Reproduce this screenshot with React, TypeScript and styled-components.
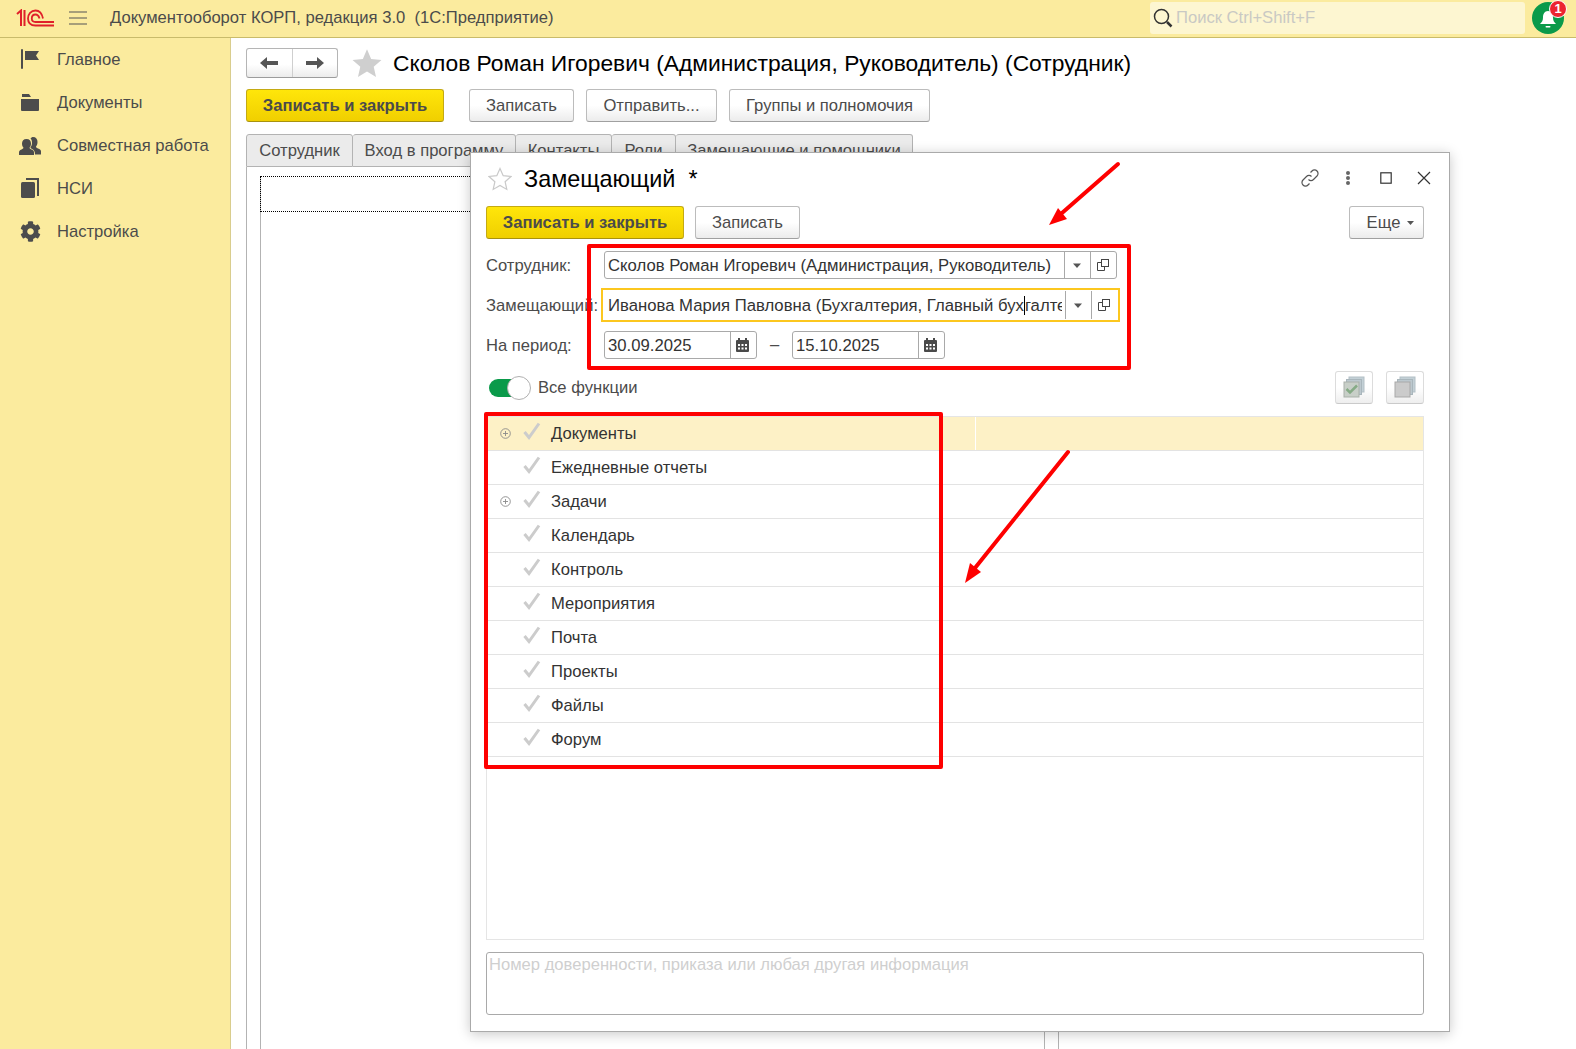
import * as React from 'react';
import styled, { createGlobalStyle } from 'styled-components';
import { FaCog } from 'react-icons/fa';

const GlobalStyle = createGlobalStyle`
  html, body {
    margin: 0;
    padding: 0;
    height: 100%;
    overflow: hidden;
    background: #ffffff;
  }
  body {
    font-family: 'Liberation Sans', Arial, sans-serif;
    font-size: 16.6px;
    color: #4b4b4b;
  }
  * {
    box-sizing: border-box;
  }
`;

const Page = styled.div`
  position: relative;
  display: flex;
  flex-direction: column;
  width: 1576px;
  height: 1049px;
  overflow: hidden;
`;

const TopBar = styled.header`
  display: flex;
  align-items: center;
  flex: 0 0 38px;
  padding: 0 0 1px 16px;
  background: #fbeb9e;
  border-bottom: 1px solid #c9bb6b;
`;

const Logo = styled.svg`
  flex: none;
  width: 38px;
  height: 18px;
`;

const Burger = styled.svg`
  flex: none;
  width: 18px;
  height: 14px;
  margin-left: 15px;
`;

const AppTitle = styled.div`
  flex: 1;
  margin-left: 23px;
  white-space: pre;
`;

const SearchBox = styled.div`
  display: flex;
  align-items: center;
  gap: 3px;
  width: 375px;
  height: 32px;
  padding-left: 3px;
  background: #fdf6d1;
  border-radius: 3px;
  color: #c9c9c4;
`;

const BellWrap = styled.div`
  position: relative;
  flex: none;
  width: 32px;
  height: 32px;
  margin: 0 12px 0 7px;
  background: #0a9a4a;
  border-radius: 50%;
`;

const Badge = styled.span`
  position: absolute;
  top: -2px;
  right: -3px;
  width: 18px;
  height: 18px;
  background: #ec2430;
  border: 1px solid #fff;
  border-radius: 50%;
  color: #fff;
  font-size: 13px;
  font-weight: 700;
  line-height: 16px;
  text-align: center;
`;

const Body = styled.div`
  display: flex;
  flex: 1;
  min-height: 0;
`;

const Sidebar = styled.nav`
  display: flex;
  flex-direction: column;
  flex: 0 0 231px;
  background: #fbeb9e;
  border-right: 1px solid #d9cd8e;
`;

const NavItem = styled.div`
  display: flex;
  align-items: center;
  gap: 15px;
  height: 43px;
  padding-left: 19px;
`;

const NavIcon = styled.span`
  display: flex;
  align-items: center;
  justify-content: center;
  width: 23px;
  height: 23px;
  color: #4c4c4c;
`;

const Main = styled.main`
  display: flex;
  flex-direction: column;
  flex: 1;
  min-width: 0;
  overflow: hidden;
  padding: 10px 0 0 15px;
`;

const FormHead = styled.div`
  display: flex;
  align-items: center;
  height: 30px;
`;

const NavGroup = styled.div`
  display: flex;
  width: 92px;
  height: 30px;
  background: linear-gradient(#ffffff 55%, #ececec);
  border: 1px solid #b5b5b5;
  border-bottom-color: #9c9c9c;
  border-radius: 3px;
`;

const NavArrow = styled.button`
  display: flex;
  flex: 1;
  align-items: center;
  justify-content: center;
  padding: 0;
  background: none;
  border: none;
  & + & {
    border-left: 1px solid #cfcfcf;
  }
`;

const HeadStar = styled.svg`
  width: 32px;
  height: 31px;
  margin-left: 13px;
`;

const FormTitle = styled.h1`
  margin: 0 0 0 10px;
  color: #000;
  font-size: 22.82px;
  font-weight: 400;
  white-space: nowrap;
`;

const ButtonRow = styled.div`
  display: flex;
  gap: 12px;
  margin-top: 11px;
`;

const Button = styled.button<{ $primary?: boolean; $width: number; $after?: number }>`
  flex: none;
  width: ${(p) => p.$width}px;
  height: 33px;
  margin-right: ${(p) => p.$after ?? 0}px;
  padding: 0;
  background: ${(p) => (p.$primary ? 'linear-gradient(#ffe60a, #f0cf00)' : 'linear-gradient(#ffffff 50%, #ececec)')};
  border: 1px solid ${(p) => (p.$primary ? '#c4aa13' : '#bcbcbc')};
  border-bottom-color: ${(p) => (p.$primary ? '#a8920e' : '#a0a0a0')};
  border-radius: 3px;
  color: #4b4b4b;
  font-family: inherit;
  font-size: 16.6px;
  font-weight: ${(p) => (p.$primary ? 700 : 400)};
`;

const Tabs = styled.div`
  display: flex;
  flex: none;
  height: 33px;
  margin-top: 12px;
`;

const Tab = styled.div<{ $width: number }>`
  flex: none;
  width: ${(p) => p.$width}px;
  height: 33px;
  padding-top: 6px;
  background: #ebebeb;
  border: 1px solid #b3b3b3;
  border-left-width: 0;
  border-radius: 3px 3px 0 0;
  text-align: center;
  white-space: nowrap;
  &:first-child {
    border-left-width: 1px;
  }
`;

const TabPanel = styled.div`
  flex: none;
  width: 813px;
  height: 1000px;
  padding: 9px 13px 0;
  border: 1px solid #b3b3b3;
  border-top-width: 0;
`;

const PanelInner = styled.div`
  height: 100%;
  border: 1px solid #b3b3b3;
  border-top: none;
`;

const DottedCell = styled.div`
  height: 36px;
  margin-left: -1px;
  border: 1px dotted #000;
`;

const Dialog = styled.section`
  position: absolute;
  top: 152px;
  left: 470px;
  display: flex;
  flex-direction: column;
  width: 980px;
  height: 880px;
  padding: 0 25px 16px 15px;
  background: #fff;
  border: 1px solid #aaaaaa;
  box-shadow: 0 2px 12px rgba(0, 0, 0, 0.22);
`;

const DialogHead = styled.div`
  display: flex;
  align-items: center;
  flex: 0 0 53px;
  padding: 0 0 4px 2px;
`;

const DialogStar = styled.svg`
  flex: none;
  width: 24px;
  height: 24px;
  margin-top: 2px;
`;

const DialogTitle = styled.h2`
  flex: 1;
  margin: 3px 0 0 12px;
  color: #000;
  font-size: 23.4px;
  font-weight: 400;
  white-space: pre;
`;

const HeadIcons = styled.div`
  display: flex;
  align-items: center;
  margin-right: -19px;
`;

const HeadIconSlot = styled.span`
  display: flex;
  align-items: center;
  justify-content: center;
  width: 38px;
`;

const DialogToolbar = styled.div`
  display: flex;
  gap: 11px;
  margin-bottom: 6px;
`;

const Spacer = styled.div`
  flex: 1;
`;

const MoreButton = styled(Button)`
  display: flex;
  align-items: center;
  justify-content: center;
  gap: 7px;
  padding-left: 8px;
`;

const FieldRow = styled.div`
  display: flex;
  align-items: center;
  height: 40px;
`;

const FieldLabel = styled.label`
  flex: 0 0 118px;
  padding-top: 1px;
  white-space: nowrap;
`;

const Field = styled.div<{ $focused?: boolean; $width: number }>`
  display: flex;
  align-items: stretch;
  flex: none;
  width: ${(p) => p.$width}px;
  height: ${(p) => (p.$focused ? 34 : 28)}px;
  margin: 0 ${(p) => (p.$focused ? -3 : 0)}px;
  padding: ${(p) => (p.$focused ? '1px' : 0)};
  border: ${(p) => (p.$focused ? '2px solid #fcc71f' : '1px solid #a9a9a9')};
  border-radius: ${(p) => (p.$focused ? 0 : 3)}px;
`;

const FieldText = styled.div<{ $focused?: boolean }>`
  flex: 1;
  min-width: 0;
  margin: ${(p) => (p.$focused ? '1px 3px 0 1px' : 0)};
  padding: 1px 0 0 3px;
  overflow: hidden;
  font-size: 16.7px;
  line-height: 26px;
  white-space: nowrap;
  color: #333;
`;

const Caret = styled.span`
  display: inline-block;
  width: 0;
  height: 19px;
  vertical-align: -4px;
  border-left: 1px solid #000;
`;

const FieldButton = styled.span`
  display: flex;
  align-items: center;
  justify-content: center;
  flex: none;
  width: 26px;
  padding-right: 2px;
  border-left: 1px solid #a9a9a9;
`;

const DateDash = styled.span`
  flex: 0 0 35px;
  text-align: center;
`;

const ToggleRow = styled.div`
  display: flex;
  align-items: center;
  height: 46px;
  padding-left: 3px;
`;

const Toggle = styled.span`
  position: relative;
  flex: none;
  width: 40px;
  height: 18px;
  background: #0a9a4a;
  border-radius: 9px;
`;

const ToggleKnob = styled.span`
  position: absolute;
  top: -3px;
  right: -2px;
  width: 24px;
  height: 24px;
  background: #fff;
  border: 1px solid #b0b0b0;
  border-radius: 50%;
`;

const ToggleLabel = styled.span`
  margin-left: 9px;
  flex: 1;
`;

const IconButton = styled.button`
  display: flex;
  align-items: center;
  justify-content: center;
  flex: none;
  width: 38px;
  height: 33px;
  margin: -2px 0 0 13px;
  padding: 0;
  background: linear-gradient(#ffffff 50%, #eeeeee);
  border: 1px solid #dcdcdc;
  border-bottom-color: #cacaca;
  border-radius: 3px;
`;

const Table = styled.div`
  flex: 1;
  margin-top: 5px;
  border: 1px solid #e5e5e5;
`;

const TableRow = styled.div<{ $active?: boolean }>`
  display: grid;
  grid-template-columns: 489px 1fr;
  height: 34px;
  border-bottom: 1px solid #e3e3e3;
  background: ${(p) => (p.$active ? '#fdf1c6' : '#fff')};
`;

const NameCell = styled.div`
  display: flex;
  align-items: center;
  border-right: 1px solid #fff;
`;

const PlusSlot = styled.span`
  display: flex;
  align-items: center;
  justify-content: center;
  flex: 0 0 36px;
`;

const Check = styled.svg`
  flex: none;
  width: 18px;
  height: 18px;
  margin: -6px 10px 0 0;
`;

const NameText = styled.span`
  padding-top: 1px;
  color: #333;
`;

const Note = styled.div`
  flex: 0 0 63px;
  margin-top: 12px;
  padding: 2px 2px;
  border: 1px solid #a9a9a9;
  border-radius: 3px;
  color: #cfcfcf;
`;

const RedFrame = styled.div<{ $x: number; $y: number; $w: number; $h: number }>`
  position: absolute;
  left: ${(p) => p.$x}px;
  top: ${(p) => p.$y}px;
  width: ${(p) => p.$w}px;
  height: ${(p) => p.$h}px;
  border: 4px solid #fe0000;
  border-radius: 2px;
  pointer-events: none;
`;

const ArrowLayer = styled.svg`
  position: absolute;
  top: 0;
  left: 0;
  pointer-events: none;
`;

const navItems = [
  { label: 'Главное', icon: 'flag' },
  { label: 'Документы', icon: 'folder' },
  { label: 'Совместная работа', icon: 'users' },
  { label: 'НСИ', icon: 'pile' },
  { label: 'Настройка', icon: 'gear' },
];

const tabs = [
  { label: 'Сотрудник', width: 107 },
  { label: 'Вход в программу', width: 163 },
  { label: 'Контакты', width: 96 },
  { label: 'Роли', width: 64 },
  { label: 'Замещающие и помощники', width: 237 },
];

const functions = [
  { name: 'Документы', expandable: true },
  { name: 'Ежедневные отчеты' },
  { name: 'Задачи', expandable: true },
  { name: 'Календарь' },
  { name: 'Контроль' },
  { name: 'Мероприятия' },
  { name: 'Почта' },
  { name: 'Проекты' },
  { name: 'Файлы' },
  { name: 'Форум' },
];

function NavGlyph({ icon }: { icon: string }) {
  if (icon === 'gear') return <FaCog size={21} />;
  return (
    <svg width="23" height="23" viewBox="0 0 23 23" fill="currentColor">
      {icon === 'flag' && (
        <>
          <rect x="2" y="1" width="2" height="20" rx="1" />
          <path d="M6 3h14l-3 4.500 3 4.500H6z" />
        </>
      )}
      {icon === 'folder' && (
        <>
          <path d="M3 3h7l2 3H3z" />
          <path d="M2 8h18v11a1 1 0 0 1-1 1H3a1 1 0 0 1-1-1z" />
        </>
      )}
      {icon === 'users' && (
        <>
          <path d="M14 3c3 0 4.500 2 4.500 5 0 2-.7 3.500-1.500 4.500 0 1 .5 1.300 2 2 2 .8 3 1.500 3 3v3h-6c0-3-1-4.500-3-5.500-1-.5-1.500-1-1.500-2 1-1 1.500-2.500 1.500-4 0-2-.5-3.500-1.500-4.700C12.800 3.200 13.300 3 14 3z" />
          <path d="M7.500 5C10.500 5 12 7 12 9.500c0 1.800-.6 3.200-1.400 4.100 0 1 .4 1.300 1.900 2 1.800.8 2.500 1.600 2.500 3V21H0v-2.400c0-1.400.7-2.200 2.500-3 1.500-.7 1.900-1 1.900-2C3.600 12.700 3 11.300 3 9.500 3 7 4.500 5 7.500 5z" />
        </>
      )}
      {icon === 'pile' && (
        <>
          <path d="M7 1h13v18h-2V3H7z" />
          <rect x="2" y="5" width="14" height="16" rx="1.500" />
        </>
      )}
    </svg>
  );
}

function Calendar() {
  return (
    <svg width="13" height="14" viewBox="0 0 13 14" fill="#4a4a4a">
      <path d="M2 0h2v2h5V0h2v2h1a1 1 0 0 1 1 1v10a1 1 0 0 1-1 1H1a1 1 0 0 1-1-1V3a1 1 0 0 1 1-1h1z" />
      <g fill="#fff">
        <rect x="2" y="6" width="2" height="2" />
        <rect x="5.500" y="6" width="2" height="2" />
        <rect x="9" y="6" width="2" height="2" />
        <rect x="2" y="9.500" width="2" height="2" />
        <rect x="5.500" y="9.500" width="2" height="2" />
        <rect x="9" y="9.500" width="2" height="2" />
      </g>
    </svg>
  );
}

function Caretdown() {
  return (
    <svg width="8" height="5" viewBox="0 0 8 5">
      <path d="M0 .5h8L4 5z" fill="#555" />
    </svg>
  );
}

function OpenIcon() {
  return (
    <svg width="12" height="12" viewBox="0 0 12 12" fill="none" stroke="#444">
      <rect x="4.500" y=".5" width="7" height="7" />
      <path d="M4.500 3.500h-4v8h7v-4" />
    </svg>
  );
}

function SelectField({ value, focused, caret }: { value: string; focused?: boolean; caret?: number }) {
  return (
    <Field $focused={focused} $width={focused ? 519 : 513}>
      <FieldText $focused={focused}>
        {caret === undefined ? (
          value
        ) : (
          <>
            {value.slice(0, caret)}
            <Caret />
            {value.slice(caret)}
          </>
        )}
      </FieldText>
      <FieldButton>
        <Caretdown />
      </FieldButton>
      <FieldButton>
        <OpenIcon />
      </FieldButton>
    </Field>
  );
}

function DateField({ value }: { value: string }) {
  return (
    <Field $width={153}>
      <FieldText>{value}</FieldText>
      <FieldButton>
        <Calendar />
      </FieldButton>
    </Field>
  );
}

export default function App() {
  return (
    <Page>
      <GlobalStyle />
      <TopBar>
        <Logo viewBox="0 0 38 18" fill="none" stroke="#e0202a">
          <path d="M1 5l4-3.500V17M8.500 1v16" strokeWidth="2" />
          <path d="M27 9.500C26 4.500 23 1.500 19.500 1.500 15 1.500 12 5 12 9.500s3 7 7.500 7H38" strokeWidth="1.800" />
          <path d="M23.500 9.500c-.7-2.500-2-4-4-4-2.300 0-3.700 1.800-3.700 4s1.400 3.500 3.700 3.500H38" strokeWidth="1.800" />
        </Logo>
        <Burger viewBox="0 0 18 14" stroke="#555" strokeWidth="1.200">
          <path d="M0 1h18M0 7h18M0 13h18" />
        </Burger>
        <AppTitle>Документооборот КОРП, редакция 3.0  (1С:Предприятие)</AppTitle>
        <SearchBox>
          <svg width="20" height="20" viewBox="0 0 20 20" fill="none" stroke="#333">
            <circle cx="8.500" cy="8.500" r="7" strokeWidth="1.500" />
            <path d="M14 14l4.500 4.500" strokeWidth="2.500" />
          </svg>
          Поиск Ctrl+Shift+F
        </SearchBox>
        <BellWrap>
          <svg width="32" height="32" viewBox="0 0 32 32" fill="#fff">
            <path d="M16 9c3.500 0 5 3 5 6.500 0 3 1 4.500 3 6.500H8c2-2 3-3.500 3-6.500C11 12 12.500 9 16 9z" />
            <rect x="13.500" y="24" width="5" height="1.500" rx=".7" />
          </svg>
          <Badge>1</Badge>
        </BellWrap>
      </TopBar>
      <Body>
        <Sidebar>
          {navItems.map((item) => (
            <NavItem key={item.label}>
              <NavIcon>
                <NavGlyph icon={item.icon} />
              </NavIcon>
              {item.label}
            </NavItem>
          ))}
        </Sidebar>
        <Main>
          <FormHead>
            <NavGroup>
              <NavArrow>
                <svg width="18" height="12" viewBox="0 0 18 12" fill="#555">
                  <path d="M7 0v4h11v4H7v4L0 6z" />
                </svg>
              </NavArrow>
              <NavArrow>
                <svg width="18" height="12" viewBox="0 0 18 12" fill="#555">
                  <path d="M11 0v4H0v4h11v4l7-6z" />
                </svg>
              </NavArrow>
            </NavGroup>
            <HeadStar viewBox="0 0 24 24">
              <path
                d="M12 1l3.200 7.500 8 .7-6 5.300 1.800 7.900-7-4.200-7 4.200 1.800-7.900-6-5.300 8-.7z"
                fill="#cfcfcf"
              />
            </HeadStar>
            <FormTitle>Сколов Роман Игоревич (Администрация, Руководитель) (Сотрудник)</FormTitle>
          </FormHead>
          <ButtonRow>
            <Button $primary $width={198} $after={13}>
              Записать и закрыть
            </Button>
            <Button $width={105}>Записать</Button>
            <Button $width={131}>Отправить...</Button>
            <Button $width={201}>Группы и полномочия</Button>
          </ButtonRow>
          <Tabs>
            {tabs.map((tab) => (
              <Tab key={tab.label} $width={tab.width}>
                {tab.label}
              </Tab>
            ))}
          </Tabs>
          <TabPanel>
            <PanelInner>
              <DottedCell />
            </PanelInner>
          </TabPanel>
        </Main>
      </Body>

      <Dialog>
        <DialogHead>
          <DialogStar viewBox="0 0 24 24">
            <path
              d="M12 1.500l3.200 7.200 7.800.8-5.900 5.200 1.700 7.700L12 18.400l-6.800 4 1.700-7.700L1 9.500l7.800-.8z"
              fill="#fff"
              stroke="#c9c9c9"
              strokeWidth="1.200"
            />
          </DialogStar>
          <DialogTitle>Замещающий  *</DialogTitle>
          <HeadIcons>
            <HeadIconSlot>
              <svg width="20" height="20" viewBox="0 0 20 20" fill="none" stroke="#555" strokeWidth="1.200">
                <path d="M8.500 11.500a3.500 3.500 0 0 0 5 0l3.500-3.500a3.500 3.500 0 0 0-5-5l-1.500 1.500" />
                <path d="M11.500 8.500a3.500 3.500 0 0 0-5 0L3 12a3.500 3.500 0 0 0 5 5l1.500-1.500" />
              </svg>
            </HeadIconSlot>
            <HeadIconSlot>
              <svg width="6" height="14" viewBox="0 0 6 14" fill="#666">
                <circle cx="3" cy="2" r="2" />
                <circle cx="3" cy="7" r="2" />
                <circle cx="3" cy="12" r="2" />
              </svg>
            </HeadIconSlot>
            <HeadIconSlot>
              <svg width="12" height="12" viewBox="0 0 12 12" fill="none" stroke="#333" strokeWidth="1.200">
                <rect x=".8" y=".8" width="10.400" height="10.400" />
              </svg>
            </HeadIconSlot>
            <HeadIconSlot>
              <svg width="14" height="14" viewBox="0 0 14 14" stroke="#333" strokeWidth="1.200">
                <path d="M1 1l12 12M13 1L1 13" />
              </svg>
            </HeadIconSlot>
          </HeadIcons>
        </DialogHead>
        <DialogToolbar>
          <Button $primary $width={198}>
            Записать и закрыть
          </Button>
          <Button $width={105}>Записать</Button>
          <Spacer />
          <MoreButton $width={75}>
            Еще
            <svg width="7" height="4" viewBox="0 0 7 4">
              <path d="M0 0h7L3.500 4z" fill="#555" />
            </svg>
          </MoreButton>
        </DialogToolbar>
        <FieldRow>
          <FieldLabel>Сотрудник:</FieldLabel>
          <SelectField value="Сколов Роман Игоревич (Администрация, Руководитель)" />
        </FieldRow>
        <FieldRow>
          <FieldLabel>Замещающий:</FieldLabel>
          <SelectField value="Иванова Мария Павловна (Бухгалтерия, Главный бухгалтер)" focused caret={48} />
        </FieldRow>
        <FieldRow>
          <FieldLabel>На период:</FieldLabel>
          <DateField value="30.09.2025" />
          <DateDash>–</DateDash>
          <DateField value="15.10.2025" />
        </FieldRow>
        <ToggleRow>
          <Toggle>
            <ToggleKnob />
          </Toggle>
          <ToggleLabel>Все функции</ToggleLabel>
          <IconButton>
            <svg width="22" height="22" viewBox="0 0 22 22">
              <rect x="6" y="1" width="15" height="15" fill="#c3d0d6" stroke="#b3c0c6" />
              <rect x="3.500" y="3.500" width="15" height="15" fill="#bcc8ce" stroke="#a9b6bc" />
              <rect x="1" y="6" width="15" height="15" fill="#c8cfc8" stroke="#a9b0a9" />
              <path d="M3.500 13l3.500 3.500 7-7" fill="none" stroke="#86ab86" strokeWidth="2.500" />
            </svg>
          </IconButton>
          <IconButton>
            <svg width="22" height="22" viewBox="0 0 22 22">
              <rect x="6" y="1" width="15" height="15" fill="#c3d0d6" stroke="#b3c0c6" />
              <rect x="3.500" y="3.500" width="15" height="15" fill="#bcc8ce" stroke="#a9b6bc" />
              <rect x="1" y="6" width="15" height="15" fill="#cbcbcb" stroke="#a9a9a9" />
            </svg>
          </IconButton>
        </ToggleRow>
        <Table>
          {functions.map((fn, i) => (
            <TableRow key={fn.name} $active={i === 0}>
              <NameCell>
                <PlusSlot>
                  {fn.expandable && (
                    <svg width="11" height="11" viewBox="0 0 11 11" fill="none" stroke="#8a8a8a" strokeWidth=".9">
                      <circle cx="5.500" cy="5.500" r="4.800" />
                      <path d="M3 5.500h5M5.500 3v5" />
                    </svg>
                  )}
                </PlusSlot>
                <Check viewBox="0 0 18 18" fill="none" stroke="#cccccc" strokeWidth="3">
                  <path d="M1.500 10l4.500 5.500L16 1.500" />
                </Check>
                <NameText>{fn.name}</NameText>
              </NameCell>
              <div />
            </TableRow>
          ))}
        </Table>
        <Note>Номер доверенности, приказа или любая другая информация</Note>
      </Dialog>

      <RedFrame $x={587} $y={244} $w={544} $h={126} />
      <RedFrame $x={484} $y={412} $w={459} $h={357} />
      <ArrowLayer width="1576" height="1049" viewBox="0 0 1576 1049">
        <path d="M1118 164L1062 213" stroke="#fe0000" strokeWidth="4" strokeLinecap="round" />
        <path d="M1049 225l9-17 9 11z" fill="#fe0000" />
        <path d="M1068 452L975 568" stroke="#fe0000" strokeWidth="4" strokeLinecap="round" />
        <path d="M965 583l5-20 11 9z" fill="#fe0000" />
      </ArrowLayer>
    </Page>
  );
}
